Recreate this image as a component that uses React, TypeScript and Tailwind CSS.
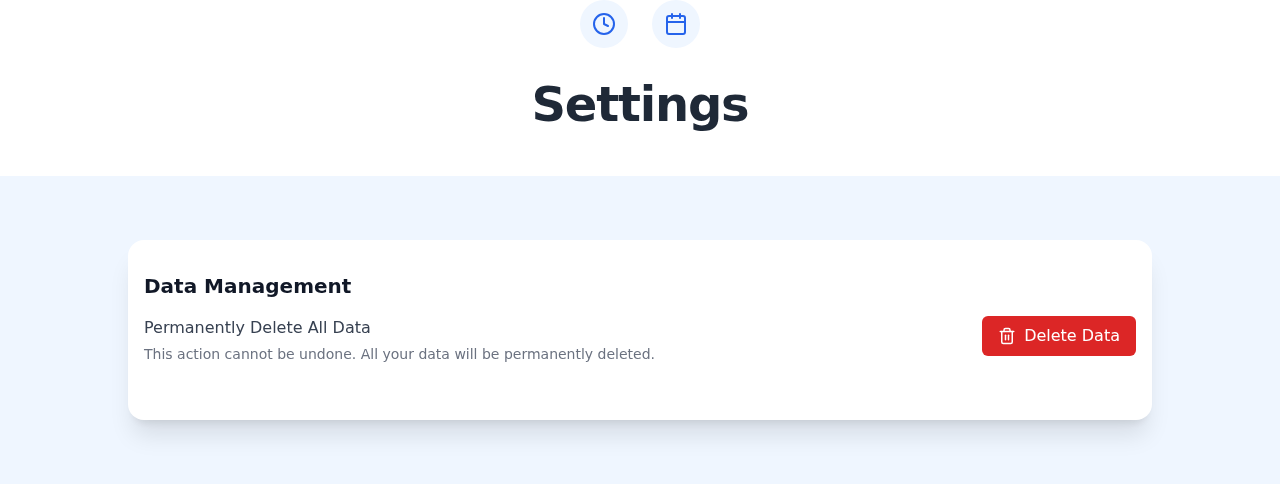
import { Calendar, Clock, Trash2 } from "lucide-react";

export default function App() {
  return (
    <div className="min-h-screen bg-[#eff6ff] font-['DejaVu_Sans',sans-serif]">
      <header className="flex h-44 flex-col items-center bg-white will-change-transform">
        <div className="flex gap-6">
          <div className="flex size-12 items-center justify-center rounded-full bg-[#eff6ff]">
            <Clock className="size-6 text-[#2563eb]" />
          </div>
          <div className="flex size-12 items-center justify-center rounded-full bg-[#eff6ff]">
            <Calendar className="size-6 text-[#2563eb]" />
          </div>
        </div>
        <h1 className="mt-8 w-full text-center text-5xl leading-none font-bold tracking-tight text-[#1f2937]">Settings</h1>
      </header>
      <main className="px-32 py-16">
        <section className="h-45 rounded-2xl bg-white px-4 py-8 shadow-xl will-change-transform">
          <h2 className="mb-4 text-xl font-semibold text-[#111827]">Data Management</h2>
          <div className="flex items-start justify-between">
            <div>
              <h3 className="text-base font-medium text-[#374151]">Permanently Delete All Data</h3>
              <p className="mt-1 text-sm text-[#6b7280]">
                This action cannot be undone. All your data will be permanently deleted.
              </p>
            </div>
            <button className="flex items-center gap-2 rounded-md bg-[#dc2626] px-4 py-2 text-white">
              <Trash2 className="size-[18px]" />
              <span>Delete Data</span>
            </button>
          </div>
        </section>
      </main>
    </div>
  );
}
